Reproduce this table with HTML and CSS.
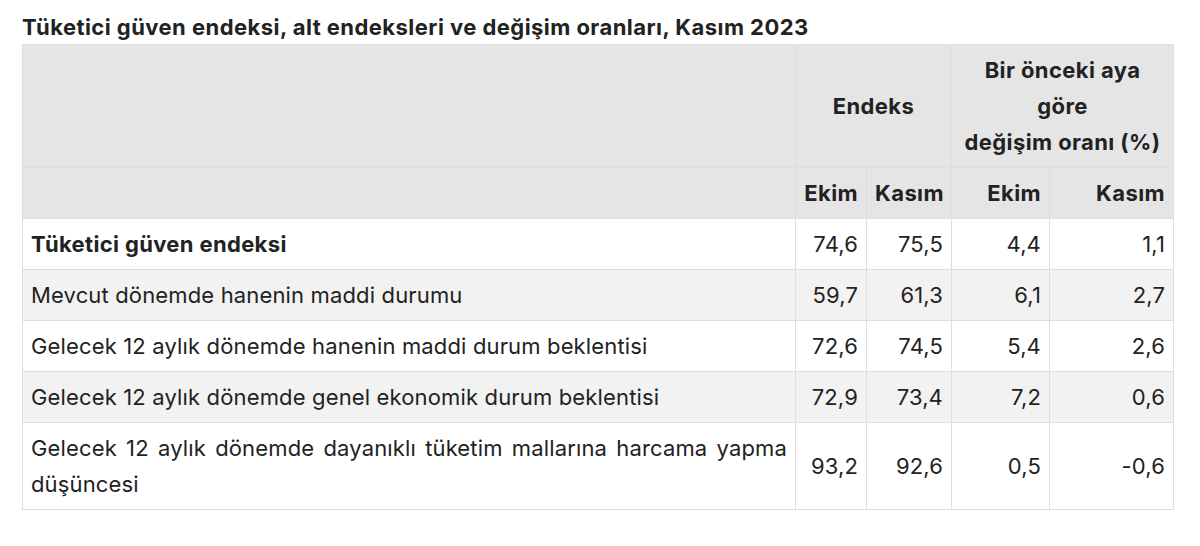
FILE: index.html
```html
<!DOCTYPE html>
<html lang="tr">
<head>
<meta charset="utf-8">
<title>Tüketici güven endeksi</title>
<link rel="stylesheet" href="styles.css">
</head>
<body>
<div class="page">
  <h2 class="title">Tüketici güven endeksi, alt endeksleri ve değişim oranları, Kasım 2023</h2>
  <table class="data">
    <colgroup>
      <col class="c-label">
      <col class="c-a">
      <col class="c-b">
      <col class="c-c">
      <col class="c-d">
    </colgroup>
    <thead>
      <tr class="h1">
        <th></th>
        <th colspan="2" class="center">Endeks</th>
        <th colspan="2" class="center">Bir önceki aya<br>göre<br>değişim oranı (%)</th>
      </tr>
      <tr class="h2">
        <th></th>
        <th class="num">Ekim</th>
        <th class="num">Kasım</th>
        <th class="num">Ekim</th>
        <th class="num">Kasım</th>
      </tr>
    </thead>
    <tbody>
      <tr>
        <td class="label strong">Tüketici güven endeksi</td>
        <td class="num">74,6</td><td class="num">75,5</td><td class="num">4,4</td><td class="num">1,1</td>
      </tr>
      <tr>
        <td class="label">Mevcut dönemde hanenin maddi durumu</td>
        <td class="num">59,7</td><td class="num">61,3</td><td class="num">6,1</td><td class="num">2,7</td>
      </tr>
      <tr>
        <td class="label">Gelecek 12 aylık dönemde hanenin maddi durum beklentisi</td>
        <td class="num">72,6</td><td class="num">74,5</td><td class="num">5,4</td><td class="num">2,6</td>
      </tr>
      <tr>
        <td class="label">Gelecek 12 aylık dönemde genel ekonomik durum beklentisi</td>
        <td class="num">72,9</td><td class="num">73,4</td><td class="num">7,2</td><td class="num">0,6</td>
      </tr>
      <tr>
        <td class="label">Gelecek 12 aylık dönemde dayanıklı tüketim mallarına harcama yapma düşüncesi</td>
        <td class="num">93,2</td><td class="num">92,6</td><td class="num">0,5</td><td class="num">-0,6</td>
      </tr>
    </tbody>
  </table>
</div>
</body>
</html>
```
FILE: styles.css
```css
html, body {
  margin: 0;
  padding: 0;
  background: #ffffff;
}
.page {
  padding: 12px 27px 0 22px;
  font-family: Inter, "Liberation Sans", sans-serif;
  color: #222222;
}
.title {
  margin: 0 0 2px 0;
  font-size: 22px;
  line-height: 30px;
  font-weight: 700;
  letter-spacing: 0.45px;
  color: #222;
}
.data {
  border-collapse: collapse;
  table-layout: fixed;
  width: 1151px;
  font-size: 22px;
  line-height: 36px;
  letter-spacing: 0.15px;
}
.c-label { width: 773px; }
.c-a { width: 71px; }
.c-b { width: 85px; }
.c-c { width: 98px; }
.c-d { width: 124px; }
.data th, .data td {
  border: 1px solid #dedede;
  padding: 7px 8px;
  vertical-align: middle;
}
.data thead th {
  background: #e5e5e5;
  font-weight: 700;
  letter-spacing: 0.4px;
}
.data .center { text-align: center; }
.data .num { text-align: right; }
.data td.label { text-align: justify; }
.data td.strong { font-weight: 700; letter-spacing: 0.35px; }
.data tbody tr:nth-child(odd) td { background: #ffffff; }
.data tbody tr:nth-child(even) td { background: #f2f2f2; }
```
